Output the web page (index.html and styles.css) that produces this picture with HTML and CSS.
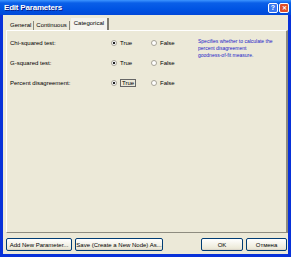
FILE: index.html
```html
<!DOCTYPE html>
<html lang="en">
<head>
    <meta charset="UTF-8">
    <title>Edit Parameters</title>
    <link rel="stylesheet" href="styles.css">
</head>
<body>
    <div class="window">
        <div class="titlebar">
            <span class="title">Edit Parameters</span>
            <div class="title-buttons">
                <span class="tbtn help">?</span>
                <span class="tbtn close">&#x2715;</span>
            </div>
        </div>
        <div class="content">
            <div class="tabs">
                <span class="tab">General</span>
                <span class="tab">Continuous</span>
                <span class="tab active">Categorical</span>
            </div>
            <div class="panel">
                <div class="params">
                    <div class="row">
                        <span class="label">Chi-squared test:</span>
                        <span class="radio checked">True</span>
                        <span class="radio">False</span>
                    </div>
                    <div class="row">
                        <span class="label">G-squared test:</span>
                        <span class="radio checked">True</span>
                        <span class="radio">False</span>
                    </div>
                    <div class="row">
                        <span class="label">Percent disagreement:</span>
                        <span class="radio checked"><span class="focus">True</span></span>
                        <span class="radio">False</span>
                    </div>
                </div>
                <p class="desc">Specifies whether to calculate the<br>percent disagreement<br>goodness-of-fit measure.</p>
            </div>
            <div class="footer">
                <button class="btn add">Add New Parameter...</button>
                <button class="btn save">Save (Create a New Node) As...</button>
                <span class="spacer"></span>
                <button class="btn ok">OK</button>
                <button class="btn cancel">Отмена</button>
            </div>
        </div>
    </div>
</body>
</html>
```

FILE: styles.css
```css
body {
    margin: 0;
    font-family: "Liberation Sans", Arial, sans-serif;
    font-size: 6px;
    color: #000;
}

.window {
    width: 291px;
    height: 257px;
    box-sizing: border-box;
    background: #ece9d8;
    border: 3px solid #0831d9;
    border-top: none;
    display: flex;
    flex-direction: column;
}

/* Title bar */
.titlebar {
    height: 15px;
    flex: none;
    margin: 0 -3px;
    padding: 0 2px 0 4px;
    display: flex;
    align-items: center;
    justify-content: space-between;
    background: linear-gradient(to bottom, #3d95ff 0%, #0a5fe8 20%, #0054e3 60%, #0148d8 100%);
}
.title {
    color: #fff;
    font-weight: bold;
    font-size: 8px;
    letter-spacing: -0.2px;
    text-shadow: 1px 1px 0 #0a1e8a;
}
.title-buttons {
    display: flex;
    gap: 1px;
}
.tbtn {
    width: 10px;
    height: 10px;
    border: 1px solid #fff;
    border-radius: 2px;
    color: #fff;
    font-size: 7px;
    font-weight: bold;
    display: flex;
    align-items: center;
    justify-content: center;
    box-sizing: border-box;
}
.help {
    background: #3b78f0;
}
.close {
    background: #e0502a;
    font-size: 6px;
}

.content {
    flex: 1;
    display: flex;
    flex-direction: column;
    padding: 3px 0 3px 3px;
}

/* Tabs */
.tabs {
    display: flex;
    align-items: flex-end;
    padding-left: 2px;
    height: 12px;
    white-space: nowrap;
}
.tab {
    padding: 0 2px 1px;
    border-right: 1px solid #8a887a;
    line-height: 8px;
}
.tab.active {
    background: #f4f3ee;
    padding: 1px 3px 3px;
    margin-left: 1px;
    border-right: 2px solid #7d7b70;
}

.panel {
    flex: 1;
    border: 1px solid #fff;
    border-right: 2px solid #8e8c80;
    border-bottom: 1px solid #8e8c80;
    display: flex;
    padding: 2px 4px 5px 3px;
}
.params {
    flex: 1;
}
.row {
    display: flex;
    align-items: center;
    height: 20px;
    white-space: nowrap;
}
.label {
    width: 101px;
}
.radio {
    width: 40px;
    display: flex;
    align-items: center;
    gap: 3px;
}
.radio::before {
    content: "";
    width: 4px;
    height: 4px;
    border-radius: 50%;
    border: 1px solid #a6a397;
    background: #fff;
}
.radio.checked::before {
    background: radial-gradient(circle, #222 0 1px, #fff 1.6px);
}
.focus {
    border: 1px solid #666;
    padding: 0 1px;
}
.desc {
    width: 84px;
    margin: 5px 0 0;
    color: #2222c8;
    font-size: 5px;
    line-height: 7px;
    white-space: nowrap;
}

/* Bottom buttons */
.footer {
    display: flex;
    align-items: center;
    gap: 3px;
    padding-top: 5px;
    padding-right: 1px;
}
.spacer {
    flex: 1;
}
.btn {
    font-family: inherit;
    font-size: 6px;
    height: 13px;
    padding: 0;
    white-space: nowrap;
    background: linear-gradient(to bottom, #fff, #ece9d8 85%, #d6d0c5);
    border: 1px solid #003c74;
    border-radius: 2px;
}
.add {
    width: 66px;
}
.save {
    width: 88px;
}
.ok {
    width: 42px;
}
.cancel {
    width: 41px;
}
```
